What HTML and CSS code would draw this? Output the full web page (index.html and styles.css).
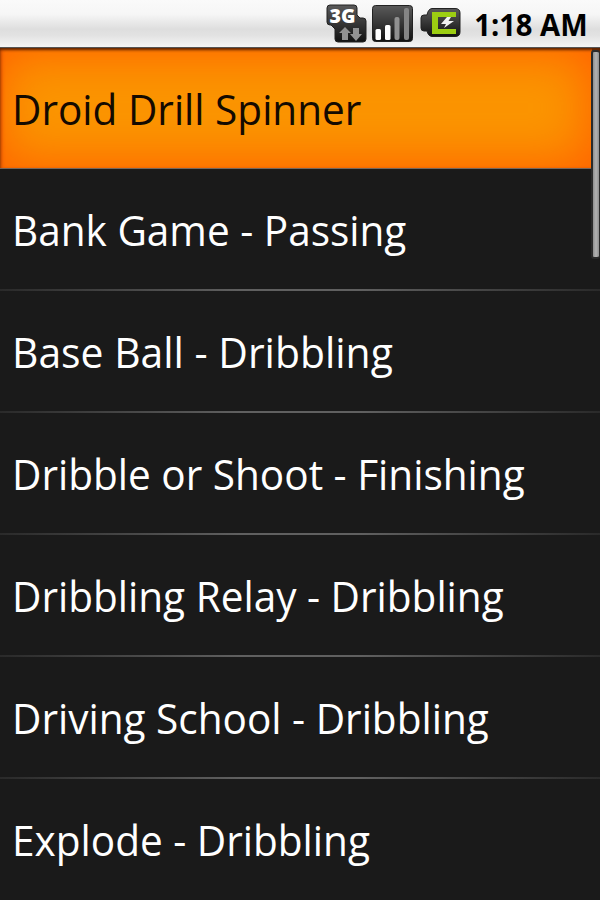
FILE: index.html
```html
<!DOCTYPE html>
<html lang="en">
<head>
    <meta charset="UTF-8">
    <meta name="viewport" content="width=device-width, initial-scale=1.0">
    <title>Droid Drill Spinner</title>
    <link rel="stylesheet" href="styles.css">
</head>
<body>
    <header class="status-bar">
        <svg class="status-icons" width="141" height="44" viewBox="0 0 141 44">
            <defs>
                <linearGradient id="dark" x1="0" y1="0" x2="0" y2="1">
                    <stop offset="0" stop-color="#5a5a5a"/>
                    <stop offset="0.5" stop-color="#363636"/>
                    <stop offset="1" stop-color="#111"/>
                </linearGradient>
            </defs>
            <!-- 3G data -->
            <path d="M10 5H34Q37 5 37 8V15L40 18H43Q46 18 46 21V39Q46 42 43 42H18Q15 42 15 39V29L11 25H10Q7 25 7 22V8Q7 5 10 5Z" fill="url(#dark)" stroke="#222"/>
            <text class="network" x="9.500" y="23" textLength="26" lengthAdjust="spacingAndGlyphs">3G</text>
            <path d="M25 27L31 33H28V40H22V33H19Z" fill="#929292"/>
            <path d="M33 28H39V34H42L36 41L30 34H33Z" fill="#929292"/>
            <!-- Signal -->
            <rect x="52.500" y="5.500" width="40" height="36" rx="3" fill="url(#dark)" stroke="#222"/>
            <rect x="55.500" y="29" width="5.500" height="11" rx="1.500" fill="#fff"/>
            <rect x="65" y="25" width="5.500" height="15" rx="1.500" fill="#fff"/>
            <rect x="74.500" y="17" width="5" height="23" rx="2" fill="#909090"/>
            <rect x="84" y="8" width="5" height="32" rx="2" fill="#858585"/>
            <!-- Battery -->
            <path d="M112 8.500H135Q140 8.500 140 13V32Q140 36.500 135 36.500H112Q108 36 107 31H104Q101 31 101 28V18Q101 15 104 15H107Q108 9 112 8.500Z" fill="url(#dark)" stroke="#222"/>
            <path d="M112 12H136V17H118V29H136V34H112Z" fill="#9cce12"/>
            <path d="M127 17L121 24H126L124 28L134 21H128.500L131 17Z" fill="#f2f2f2"/>
        </svg>
        <div class="clock">1:18 AM</div>
    </header>

    <ul class="drill-list">
        <li class="drill selected"><span class="name">Droid Drill Spinner</span></li>
        <li class="drill"><span class="name">Bank Game - Passing</span></li>
        <li class="drill"><span class="name wide">Base Ball - Dribbling</span></li>
        <li class="drill"><span class="name">Dribble or Shoot - Finishing</span></li>
        <li class="drill"><span class="name">Dribbling Relay - Dribbling</span></li>
        <li class="drill"><span class="name">Driving School - Dribbling</span></li>
        <li class="drill"><span class="name">Explode - Dribbling</span></li>
    </ul>
    <div class="scrollbar"></div>
</body>
</html>
```
FILE: styles.css
```css
body {
    margin: 0;
    height: 900px;
    overflow: hidden;
    position: relative;
    background: #1a1a1a;
    font-family: 'Open Sans', sans-serif;
}

.status-bar {
    box-sizing: border-box;
    height: 48px;
    display: flex;
    justify-content: flex-end;
    padding-right: 12px;
    background: linear-gradient(#fafafa 0%, #f6f6f6 30%, #dedede 62%, #e2e2e2 75%, #f5f5f5 100%);
    border-bottom: 1px solid #555;
}

.status-icons {
    flex: none;
    margin-right: 6px;
}

.network {
    font-family: 'Open Sans', sans-serif;
    font-size: 20px;
    font-weight: 800;
    fill: #fff;
}

.clock {
    font-size: 31px;
    font-weight: bold;
    line-height: 48px;
    white-space: nowrap;
    color: #000;
    transform: scaleX(0.94);
    transform-origin: right;
}

.drill-list {
    list-style: none;
    margin: 0;
    padding: 0;
}

.drill {
    box-sizing: border-box;
    height: 122px;
    display: flex;
    align-items: center;
    padding: 0 0 0 12px;
    color: #fff;
    /* divider fades out towards both edges */
    background: linear-gradient(90deg, #2a2a2a, #606060 40%, #606060 60%, #2a2a2a) bottom / 100% 2px no-repeat;
}

.drill:last-child {
    background: none;
}

.drill.selected {
    height: 121px;
    padding-top: 1px;
    color: #140a00;
    background: #fb9500;
    border-bottom: 1px solid #75675c;
    box-shadow: inset 0 2px 3px #5a2200, inset 3px 0 3px #f06000, inset -8px 0 0 #6b2c08, inset -6px 0 50px 6px #ff6200;
}

.name {
    font-size: 42px;
    line-height: 56px;
    white-space: nowrap;
    transform: scaleX(0.965);
    transform-origin: left;
}

.name.wide {
    transform: scaleX(0.973);
}

/* Scroll thumb over the list */
.scrollbar {
    position: absolute;
    top: 50px;
    right: 0;
    box-sizing: border-box;
    width: 9px;
    height: 209px;
    border: 2px solid #2a2a2a;
    border-right-width: 1px;
    border-radius: 3px;
    background: linear-gradient(90deg, #8e8e8e, #b2b2b2, #8e8e8e);
}
```
